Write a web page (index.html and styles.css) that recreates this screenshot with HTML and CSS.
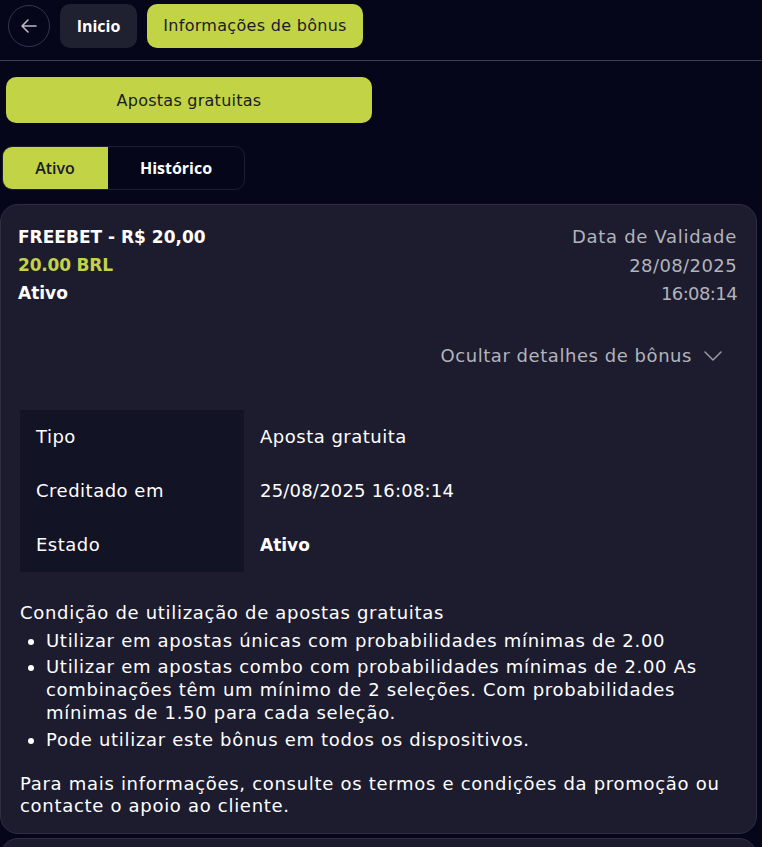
FILE: index.html
```html
<!DOCTYPE html>
<html lang="pt">
<head>
<meta charset="utf-8">
<link rel="stylesheet" href="styles.css">
</head>
<body>
<div class="page">
  <header class="topbar">
    <button class="back" aria-label="Voltar">
      <svg width="20" height="20" viewBox="0 0 20 20" fill="none" stroke="#b9bac4" stroke-width="1.6" stroke-linecap="round" stroke-linejoin="round"><path d="M17 10H3M9 4l-6 6 6 6"/></svg>
    </button>
    <button class="crumb crumb-dark">Inicio</button>
    <button class="crumb crumb-lime">Informações de bônus</button>
  </header>

  <div class="section">
    <button class="big-btn">Apostas gratuitas</button>
  </div>

  <div class="tabs">
    <div class="tab tab-active">Ativo</div>
    <div class="tab">Histórico</div>
  </div>

  <div class="card">
    <div class="card-head">
      <div class="head-left">
        <div class="title">FREEBET - R$ 20,00</div>
        <div class="amount">20.00 BRL</div>
        <div class="status">Ativo</div>
      </div>
      <div class="head-right">
        <div>Data de Validade</div>
        <div class="num">28/08/2025</div>
        <div class="num time">16:08:14</div>
      </div>
    </div>
    <div class="toggle">
      <span>Ocultar detalhes de bônus</span>
      <svg width="18" height="10" viewBox="0 0 18 10" fill="none" stroke="#9a9ba6" stroke-width="1.5" stroke-linecap="round" stroke-linejoin="round"><path d="M1 1l8 8 8-8"/></svg>
    </div>

    <div class="details">
      <div class="dt">Tipo</div><div class="dd">Aposta gratuita</div>
      <div class="dt">Creditado em</div><div class="dd num">25/08/2025 16:08:14</div>
      <div class="dt">Estado</div><div class="dd dd-bold">Ativo</div>
    </div>

    <div class="terms">
      <div class="terms-title">Condição de utilização de apostas gratuitas</div>
      <ul class="terms-list">
        <li>Utilizar em apostas únicas com probabilidades mínimas de 2.00</li>
        <li>Utilizar em apostas combo com probabilidades mínimas de 2.00 As combinações têm um mínimo de 2 seleções. Com probabilidades mínimas de 1.50 para cada seleção.</li>
        <li>Pode utilizar este bônus em todos os dispositivos.</li>
      </ul>
      <p class="terms-foot">Para mais informações, consulte os termos e condições da promoção ou contacte o apoio ao cliente.</p>
    </div>
  </div>
  <div class="card card-next"></div>
</div>
</body>
</html>
```

FILE: styles.css
```css
html {
  background: #ffffff;
}
body {
  margin: 0;
  width: 762px;
  height: 847px;
  overflow: hidden;
  background: #05061a;
  font-family: "DejaVu Sans", "Open Sans", sans-serif;
  color: #ffffff;
}
.page {
  display: flex;
  flex-direction: column;
}
button {
  font-family: inherit;
  border: none;
  cursor: pointer;
}
.topbar {
  display: flex;
  align-items: center;
  gap: 10px;
  height: 61px;
  box-sizing: border-box;
  padding: 0 0 9px 8px;
  border-bottom: 1px solid #3d3e52;
}
.back {
  width: 42px;
  height: 42px;
  border-radius: 50%;
  background: transparent;
  border: 1px solid #34354a;
  display: flex;
  align-items: center;
  justify-content: center;
  padding: 0;
}
.crumb {
  height: 44px;
  border-radius: 10px;
  padding: 0;
}
.crumb-dark {
  width: 77px;
  background: #1f2030;
  color: #ffffff;
  font-family: "Open Sans", sans-serif;
  font-size: 16px;
  font-weight: 700;
}
.crumb-lime {
  width: 216px;
  background: #c2d346;
  color: #1a1b2a;
  font-size: 16px;
  letter-spacing: 0.3px;
}
.section {
  padding: 16px 0 0 6px;
}
.big-btn {
  width: 366px;
  height: 46px;
  border-radius: 10px;
  background: #c2d346;
  color: #1a1b2a;
  font-size: 16px;
  letter-spacing: 0.25px;
}
.tabs {
  margin: 23px 0 0 2px;
  width: 243px;
  height: 44px;
  box-sizing: border-box;
  border: 1px solid #1c1d2e;
  border-radius: 10px;
  display: flex;
  overflow: hidden;
  font-family: "Open Sans", sans-serif;
}
.tab {
  flex: 1 1 auto;
  display: flex;
  align-items: center;
  justify-content: center;
  font-size: 16px;
  font-weight: 700;
  color: #ffffff;
}
.tab-active {
  flex: 0 0 106px;
  background: #c2d346;
  color: #1a1b2a;
  font-weight: 600;
  margin: -1px 0 -1px -1px;
}
.card {
  margin-top: 14px;
  width: 757px;
  box-sizing: border-box;
  background: #1c1c2e;
  border: 1px solid #2d2e43;
  border-radius: 18px;
  padding: 18px 19px 16px 17px;
}
.card-next {
  margin-top: 4px;
  height: 40px;
  padding: 0;
}
.card-head {
  display: flex;
  justify-content: space-between;
}
.head-left {
  display: flex;
  flex-direction: column;
}
.title, .amount, .status {
  font-size: 17px;
  font-weight: 700;
  line-height: 28px;
}
.amount {
  color: #c2d346;
  letter-spacing: -0.2px;
}
.head-right {
  text-align: right;
  color: #b3b3bc;
  font-size: 18px;
  letter-spacing: 0.7px;
  line-height: 28.5px;
}
.head-right .num {
  letter-spacing: 0.4px;
}
.head-right .time {
  letter-spacing: -0.6px;
}
.toggle {
  margin-top: 33px;
  display: flex;
  justify-content: flex-end;
  align-items: center;
  gap: 12px;
  padding-right: 15px;
  color: #b3b3bc;
  font-size: 18px;
  letter-spacing: 0.55px;
  line-height: 28px;
}
.details {
  margin-top: 40px;
  margin-left: 2px;
  display: grid;
  grid-template-columns: 224px 1fr;
  grid-auto-rows: 54px;
}
.dt, .dd {
  display: flex;
  align-items: center;
  font-size: 18px;
  letter-spacing: 0.5px;
}
.dt {
  background: #121324;
  padding-left: 16px;
}
.dd {
  padding-left: 16px;
}
.dd.num {
  letter-spacing: 0.2px;
}
.dd-bold {
  font-weight: 700;
  font-size: 17px;
  letter-spacing: 0;
}
.terms {
  margin-top: 29px;
  margin-left: 2px;
  font-size: 18px;
  letter-spacing: 0.7px;
  line-height: 23px;
}
.terms-list {
  margin: 5px 0 0 0;
  padding-left: 26px;
}
.terms-list li {
  margin-bottom: 3px;
}
.terms-list li:nth-child(2) {
  margin-bottom: 4px;
}
.terms-foot {
  margin: 22px 0 0 0;
  line-height: 22px;
}
```
